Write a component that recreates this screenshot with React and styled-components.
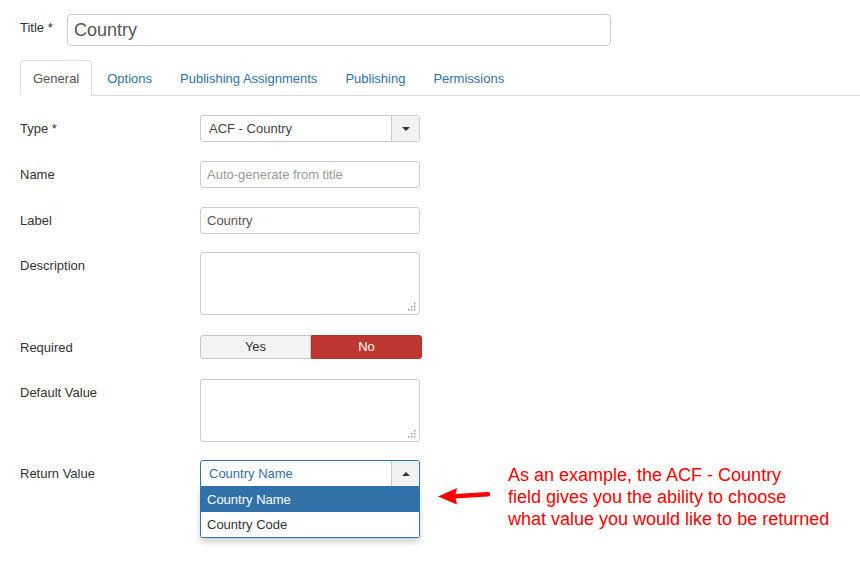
import React from 'react'
import styled, { createGlobalStyle } from 'styled-components'

const GlobalStyle = createGlobalStyle`
  body {
    margin: 0;
    background: #fff;
    color: #333;
    font-family: 'Liberation Sans', Arial, sans-serif;
    font-size: 13px;
  }
`
const Page = styled.div`
  padding-top: 14px;
`
const TitleRow = styled.div`
  align-items: flex-start;
  display: flex;
  padding-left: 20px;
`
const TitleLabel = styled.label`
  line-height: 16px;
  padding-top: 6px;
  width: 47px;
`
const TitleInput = styled.div`
  border: 1px solid #ccc;
  border-radius: 4px;
  box-sizing: border-box;
  color: #555;
  font-size: 18px;
  height: 32px;
  line-height: 30px;
  padding: 0 6px;
  width: 544px;
`
const Tabs = styled.ul`
  border-bottom: 1px solid #ddd;
  display: flex;
  height: 35px;
  list-style: none;
  margin: 14px 0 0 20px;
  padding: 0;
`
const Tab = styled.li`
  background: ${(props) => (props.$active ? '#fff' : 'transparent')};
  border: 1px solid ${(props) => (props.$active ? '#ddd' : 'transparent')};
  border-bottom-color: transparent;
  border-radius: 4px 4px 0 0;
  color: ${(props) => (props.$active ? '#555' : '#3071a9')};
  height: 33px;
  line-height: 33px;
  margin-right: 2px;
  padding: 1px 12px 0;
`
const Form = styled.div`
  padding: 19px 0 0 20px;
`
const Row = styled.div`
  display: flex;
  margin-bottom: ${(props) => props.$mb ?? 19}px;
`
const Label = styled.label`
  line-height: 18px;
  padding-top: ${(props) => props.$pt ?? 5}px;
  width: 180px;
`
const Control = styled.div`
  position: relative;
  width: 220px;
`
const Input = styled.div`
  background: #fff;
  border: 1px solid #ccc;
  border-radius: 3px;
  box-sizing: border-box;
  color: ${(props) => (props.$placeholder ? '#999' : '#555')};
  height: 27px;
  line-height: 25px;
  padding: 0 6px;
`
const TextArea = styled.div`
  border: 1px solid #ccc;
  border-radius: 3px;
  box-sizing: border-box;
  height: 63px;
  position: relative;
`
const Grip = styled.svg`
  bottom: 3px;
  position: absolute;
  right: 3px;
`
const Select = styled.div`
  background: #fff;
  border: 1px solid ${(props) => (props.$open ? '#3071a9' : '#ccc')};
  border-radius: ${(props) => (props.$open ? '3px 3px 0 0' : '3px')};
  box-sizing: border-box;
  color: ${(props) => (props.$open ? '#3071a9' : '#444')};
  display: flex;
  height: 27px;
  line-height: 25px;
`
const SelectText = styled.span`
  flex: 1;
  padding-left: 8px;
`
const SelectButton = styled.span`
  align-items: center;
  background: #f2f2f2;
  border-left: 1px solid #ccc;
  border-radius: 0 2px 2px 0;
  display: flex;
  justify-content: center;
  width: 27px;
`
const Caret = styled.span`
  border-left: 4px solid transparent;
  border-right: 4px solid transparent;
  ${(props) =>
    props.$up ? 'border-bottom: 4px solid #333;' : 'border-top: 4px solid #333;'}
  height: 0;
  width: 0;
`
const Dropdown = styled.ul`
  background: #fff;
  border: 1px solid #3071a9;
  border-radius: 0 0 3px 3px;
  border-top: none;
  box-shadow: 0 4px 6px rgba(0, 0, 0, 0.18);
  box-sizing: border-box;
  left: 0;
  list-style: none;
  margin: 0;
  padding: 0;
  position: absolute;
  top: 27px;
  width: 220px;
`
const Option = styled.li`
  background: ${(props) => (props.$selected ? '#3071a9' : '#fff')};
  color: ${(props) => (props.$selected ? '#fff' : '#333')};
  height: 25px;
  line-height: 25px;
  padding-left: 6px;
`
const Toggle = styled.div`
  display: flex;
  width: 222px;
`
const ToggleButton = styled.span`
  background: ${(props) => (props.$active ? '#bd362f' : '#f3f3f3')};
  border: 1px solid ${(props) => (props.$active ? '#b3332d' : '#c4c4c4')};
  border-radius: ${(props) => (props.$active ? '0 3px 3px 0' : '3px 0 0 3px')};
  box-sizing: border-box;
  color: ${(props) => (props.$active ? '#fff' : '#333')};
  flex: 1;
  height: 24px;
  line-height: 22px;
  text-align: center;
`
const Annotation = styled.div`
  display: flex;
  margin-left: 16px;
`
const Arrow = styled.svg`
  margin-top: 26px;
`
const Note = styled.p`
  color: #f00;
  font-size: 18px;
  line-height: 22px;
  margin: 4px 0 0 18px;
`

function ResizeGrip() {
  const dots = [
    [6, 0],
    [3, 3],
    [6, 3],
    [0, 6],
    [3, 6],
    [6, 6],
  ]
  return (
    <Grip width="8" height="8" viewBox="0 0 8 8">
      {dots.map(([x, y]) => (
        <rect key={`${x}-${y}`} x={x} y={y} width="1.5" height="1.5" fill="#999" />
      ))}
    </Grip>
  )
}

export default function App() {
  return (
    <Page>
      <GlobalStyle />
      <TitleRow>
        <TitleLabel>Title *</TitleLabel>
        <TitleInput>Country</TitleInput>
      </TitleRow>

      <Tabs>
        <Tab $active>General</Tab>
        <Tab>Options</Tab>
        <Tab>Publishing Assignments</Tab>
        <Tab>Publishing</Tab>
        <Tab>Permissions</Tab>
      </Tabs>

      <Form>
        <Row>
          <Label>Type *</Label>
          <Control>
            <Select>
              <SelectText>ACF - Country</SelectText>
              <SelectButton>
                <Caret />
              </SelectButton>
            </Select>
          </Control>
        </Row>

        <Row>
          <Label>Name</Label>
          <Control>
            <Input $placeholder>Auto-generate from title</Input>
          </Control>
        </Row>

        <Row $mb={18}>
          <Label>Label</Label>
          <Control>
            <Input>Country</Input>
          </Control>
        </Row>

        <Row $mb={20}>
          <Label>Description</Label>
          <Control>
            <TextArea>
              <ResizeGrip />
            </TextArea>
          </Control>
        </Row>

        <Row $mb={20}>
          <Label $pt={4}>Required</Label>
          <Toggle>
            <ToggleButton>Yes</ToggleButton>
            <ToggleButton $active>No</ToggleButton>
          </Toggle>
        </Row>

        <Row $mb={18}>
          <Label>Default Value</Label>
          <Control>
            <TextArea>
              <ResizeGrip />
            </TextArea>
          </Control>
        </Row>

        <Row>
          <Label>Return Value</Label>
          <Control>
            <Select $open>
              <SelectText>Country Name</SelectText>
              <SelectButton>
                <Caret $up />
              </SelectButton>
            </Select>
            <Dropdown>
              <Option $selected>Country Name</Option>
              <Option>Country Code</Option>
            </Dropdown>
          </Control>
          <Annotation>
            <Arrow width="54" height="20" viewBox="0 0 54 20">
              <path d="M2 10.5 L21 2 L19 10 L21 18.5 Z" fill="#f00" />
              <path
                d="M19 10.3 L52 8.2"
                stroke="#f00"
                strokeWidth="4.5"
                strokeLinecap="round"
              />
            </Arrow>
            <Note>
              As an example, the ACF - Country
              <br />
              field gives you the ability to choose
              <br />
              what value you would like to be returned
            </Note>
          </Annotation>
        </Row>
      </Form>
    </Page>
  )
}
